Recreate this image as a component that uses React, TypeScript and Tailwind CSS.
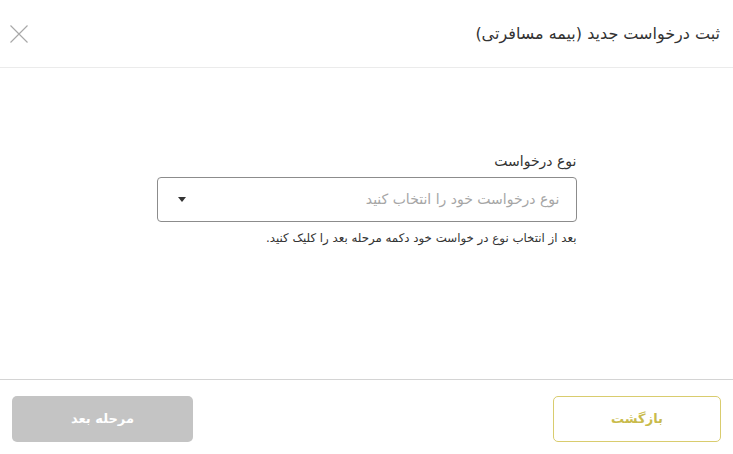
export default function App() {
  return (
    <div
      dir="rtl"
      className="flex h-screen flex-col bg-white text-[#333]"
      style={{ fontFamily: '"DejaVu Sans", "Noto Sans", sans-serif' }}
    >
      <header className="flex h-[68px] items-center justify-between border-b border-[#ebebeb] pr-[13px] pl-[10px]">
        <h1 className="text-[16px] font-normal text-[#333]">ثبت درخواست جدید (بیمه مسافرتی)</h1>
        <button className="flex h-[18px] w-[18px] items-center justify-center">
          <svg width="18" height="18" viewBox="0 0 18 18" fill="none" stroke="#a8a8a8" strokeWidth="1.1">
            <path d="M0.5 0.5 L17.5 17.5 M17.5 0.5 L0.5 17.5" />
          </svg>
        </button>
      </header>

      <main className="flex flex-1 justify-center pt-[83px]">
        <div className="w-[420px]">
          <label className="block text-[14px] leading-5 text-[#333]">نوع درخواست</label>
          <div className="mt-[6px] flex h-[45px] items-center justify-between rounded-[4px] border border-[#8c8c8c] pr-4 pl-5">
            <span className="text-[14px] text-[#a6a6a6]">نوع درخواست خود را انتخاب کنید</span>
            <span className="h-0 w-0 border-x-[4px] border-t-[5px] border-x-transparent border-t-[#333]" />
          </div>
          <p className="mt-[8px] text-[11.8px] text-[#333]">بعد از انتخاب نوع در خواست خود دکمه مرحله بعد را کلیک کنید.</p>
        </div>
      </main>

      <footer className="flex items-start justify-between border-t border-[#d4d4d4] px-[12px] pt-4 pb-3">
        <button className="h-[46px] w-[168px] rounded-[5px] border border-[#d9cc6e] bg-white text-[13px] font-bold text-[#c9bb4c]">
          بازگشت
        </button>
        <button className="h-[46px] w-[181px] rounded-[5px] bg-[#c4c4c4] text-[13px] font-bold text-white">
          مرحله بعد
        </button>
      </footer>
    </div>
  )
}
